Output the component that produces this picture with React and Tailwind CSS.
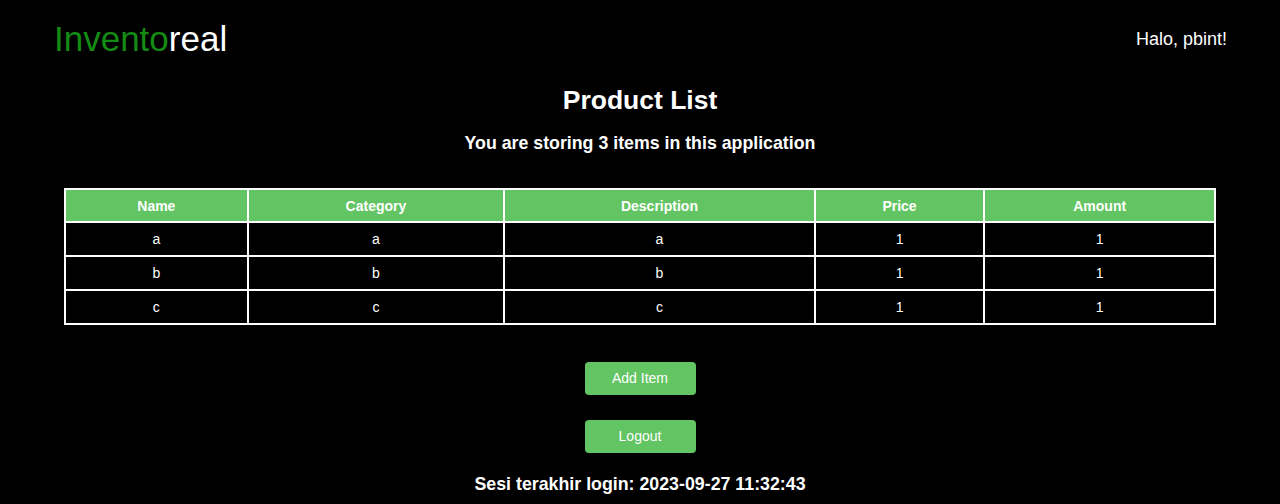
import React from "react";

const rows = [
  { name: "a", category: "a", description: "a", price: "1", amount: "1" },
  { name: "b", category: "b", description: "b", price: "1", amount: "1" },
  { name: "c", category: "c", description: "c", price: "1", amount: "1" },
];

export default function App() {
  return (
    <div className="min-h-screen bg-black text-white font-['Liberation_Sans',Arial,sans-serif]">
      <nav className="flex items-center justify-between pl-[54px] pr-[53px] h-[78px]">
        <div className="text-[35px] leading-[40px]">
          <span className="text-[#148c14]">Invento</span>
          <span className="text-white">real</span>
        </div>
        <div className="text-[18px] leading-[22px]">Halo, pbint!</div>
      </nav>
      <main className="flex flex-col items-center">
        <h1 className="mt-[7px] text-[26.5px] leading-[30px] font-bold">Product List</h1>
        <h2 className="mt-[18px] text-[17.75px] leading-[20px] font-bold">You are storing 3 items in this application</h2>
        <table className="mt-[35px] w-[1152px] border-collapse border-2 border-white text-[14px] text-center">
          <colgroup>
            <col className="w-[183px]" />
            <col className="w-[257px]" />
            <col className="w-[311px]" />
            <col className="w-[170px]" />
            <col className="w-[231px]" />
          </colgroup>
          <thead>
            <tr className="bg-[#62c462] h-[33px]">
              <th className="border-2 border-white font-bold p-0 pt-px">Name</th>
              <th className="border-2 border-white font-bold p-0 pt-px">Category</th>
              <th className="border-2 border-white font-bold p-0 pt-px">Description</th>
              <th className="border-2 border-white font-bold p-0 pt-px">Price</th>
              <th className="border-2 border-white font-bold p-0 pt-px">Amount</th>
            </tr>
          </thead>
          <tbody>
            {rows.map((r) => (
              <tr key={r.name} className="h-[34px]">
                <td className="border-2 border-white p-0">{r.name}</td>
                <td className="border-2 border-white p-0">{r.category}</td>
                <td className="border-2 border-white p-0">{r.description}</td>
                <td className="border-2 border-white p-0">{r.price}</td>
                <td className="border-2 border-white p-0">{r.amount}</td>
              </tr>
            ))}
          </tbody>
        </table>
        <button className="mt-[37px] w-[111px] h-[33px] rounded-[4px] bg-[#62c462] text-white text-[14px]">Add Item</button>
        <button className="mt-[25px] w-[111px] h-[33px] rounded-[4px] bg-[#62c462] text-white text-[14px]">Logout</button>
        <p className="mt-[20px] text-[17.8px] leading-[22px] font-bold">Sesi terakhir login: 2023-09-27 11:32:43</p>
      </main>
    </div>
  );
}
